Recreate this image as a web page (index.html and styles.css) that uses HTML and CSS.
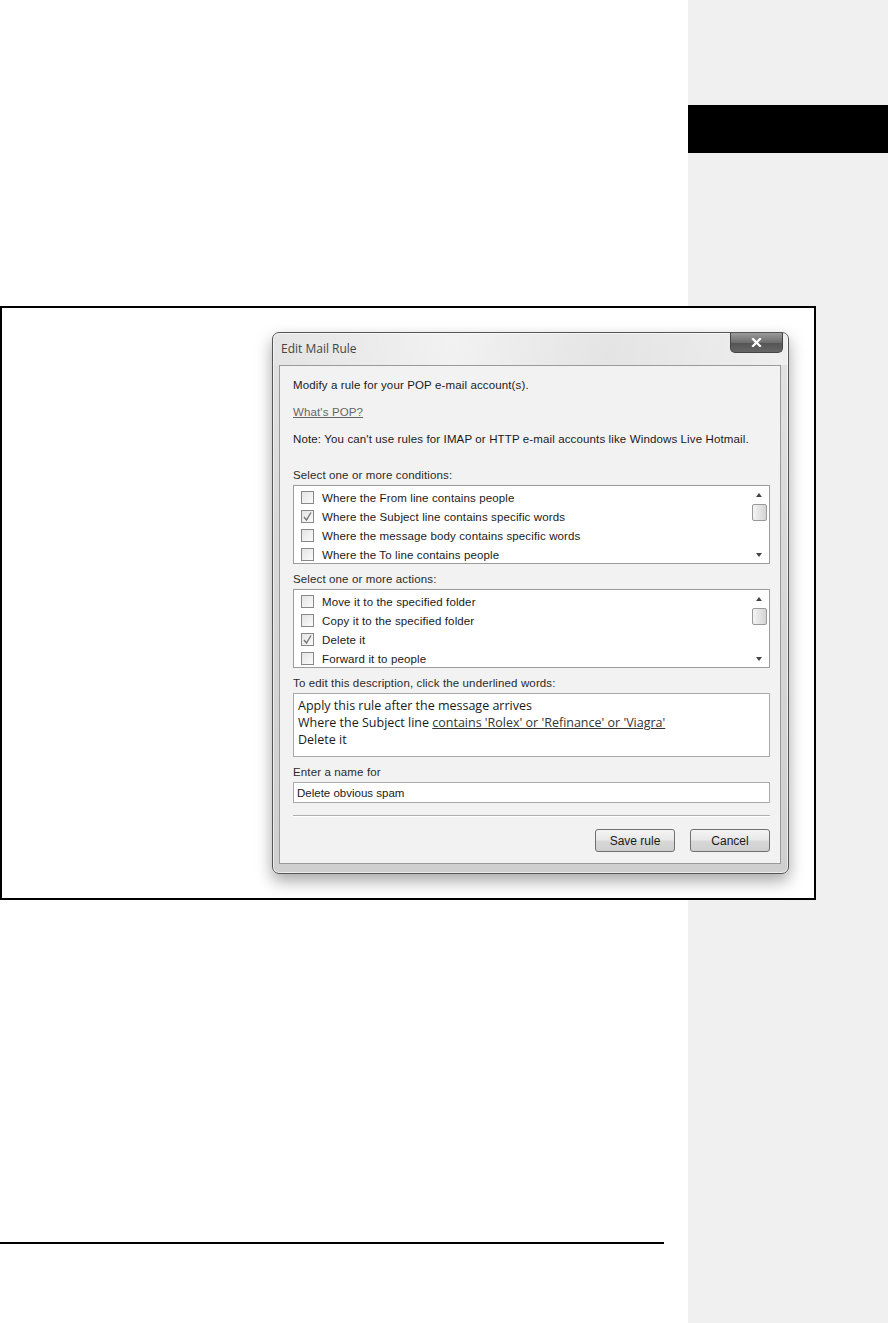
FILE: index.html
```html
<!DOCTYPE html>
<html lang="en">
<head>
    <meta charset="UTF-8">
    <title>Edit Mail Rule</title>
    <link rel="stylesheet" href="styles.css">
</head>
<body>
    <div class="page">
        <div class="tab"></div>

        <div class="figure">
            <div class="dialog">
                <div class="titlebar">
                    <span class="title">Edit Mail Rule</span>
                    <button class="close-btn" aria-label="Close">
                        <svg width="11" height="9" viewBox="0 0 11 9">
                            <path d="M2 1 L9 8 M9 1 L2 8" stroke="#fff" stroke-width="2.2" stroke-linecap="square"/>
                        </svg>
                    </button>
                </div>

                <div class="panel">
                    <p class="text first">Modify a rule for your POP e-mail account(s).</p>
                    <p class="text"><a href="#" class="link">What's POP?</a></p>
                    <p class="text">Note: You can't use rules for IMAP or HTTP e-mail accounts like Windows Live Hotmail.</p>

                    <p class="label label-first">Select one or more conditions:</p>
                    <div class="listbox">
                        <ul class="items">
                            <li><span class="check"></span>Where the From line contains people</li>
                            <li><span class="check on"><svg width="11" height="11" viewBox="0 0 11 11"><path d="M2 6 L4.5 9 L9 1.5" fill="none" stroke="#777" stroke-width="1.4"/></svg></span>Where the Subject line contains specific words</li>
                            <li><span class="check"></span>Where the message body contains specific words</li>
                            <li><span class="check"></span>Where the To line contains people</li>
                        </ul>
                        <div class="scrollbar">
                            <span class="arrow up"></span>
                            <span class="thumb"></span>
                            <span class="track"></span>
                            <span class="arrow down"></span>
                        </div>
                    </div>

                    <p class="label">Select one or more actions:</p>
                    <div class="listbox">
                        <ul class="items">
                            <li><span class="check"></span>Move it to the specified folder</li>
                            <li><span class="check"></span>Copy it to the specified folder</li>
                            <li><span class="check on"><svg width="11" height="11" viewBox="0 0 11 11"><path d="M2 6 L4.5 9 L9 1.5" fill="none" stroke="#777" stroke-width="1.4"/></svg></span>Delete it</li>
                            <li><span class="check"></span>Forward it to people</li>
                        </ul>
                        <div class="scrollbar">
                            <span class="arrow up"></span>
                            <span class="thumb"></span>
                            <span class="track"></span>
                            <span class="arrow down"></span>
                        </div>
                    </div>

                    <p class="label">To edit this description, click the underlined words:</p>
                    <div class="description">
                        <div>Apply this rule after the message arrives</div>
                        <div>Where the Subject line <a href="#" class="desc-link">contains 'Rolex' or 'Refinance' or 'Viagra'</a></div>
                        <div>Delete it</div>
                    </div>

                    <p class="label">Enter a name for</p>
                    <input class="name-input" type="text" value="Delete obvious spam">

                    <div class="separator"></div>

                    <div class="buttons">
                        <button class="btn">Save rule</button>
                        <button class="btn">Cancel</button>
                    </div>
                </div>
            </div>
        </div>

        <div class="rule-line"></div>
    </div>
</body>
</html>
```

FILE: styles.css
```css
body {
    margin: 0;
    padding: 0;
    font-family: "Liberation Sans", Arial, sans-serif;
    background: linear-gradient(to right, #ffffff 688px, #f0f0f0 688px);
}
.page {
    width: 888px;
    min-height: 1323px;
    padding-top: 105px;
    box-sizing: border-box;
}
.tab {
    margin-left: 688px;
    width: 200px;
    height: 48px;
    background-color: #000;
}
.figure {
    margin-top: 153px;
    width: 816px;
    height: 594px;
    box-sizing: border-box;
    border: 2px solid #000;
    background-color: #fff;
    padding: 24px 0 0 270px;
}
.dialog {
    width: 517px;
    box-sizing: border-box;
    border: 1px solid #555;
    border-radius: 7px;
    background: linear-gradient(to bottom, #e2e2e2 0%, #d8d8d8 40%, #cfcfcf 100%);
    box-shadow: 0 7px 16px rgba(0, 0, 0, 0.35), inset 0 0 0 1px rgba(255, 255, 255, 0.6);
}
.titlebar {
    height: 32px;
    display: flex;
    justify-content: space-between;
    align-items: flex-start;
    padding: 0 5px 0 8px;
    background: linear-gradient(to right, rgba(255,255,255,0.1), rgba(255,255,255,0.55) 35%, rgba(255,255,255,0.1) 65%, rgba(255,255,255,0.45));
    border-radius: 6px 6px 0 0;
}
.title {
    font-family: "Open Sans", "Liberation Sans", sans-serif;
    font-size: 12px;
    color: #444;
    line-height: 16px;
    margin-top: 8px;
}
.close-btn {
    width: 53px;
    height: 20px;
    margin: 0;
    padding: 0;
    border: 1px solid #444;
    border-top: none;
    border-radius: 0 0 5px 5px;
    background: linear-gradient(to bottom, #9a9a9a 0%, #6e6e6e 50%, #555 55%, #666 100%);
    display: flex;
    align-items: center;
    justify-content: center;
}
.panel {
    margin: 0 7px 9px 6px;
    border: 1px solid #9a9a9a;
    background-color: #f2f2f2;
    padding: 11px 10px 11px 13px;
}
.text, .label {
    margin: 0;
    font-size: 11.5px;
    line-height: 16px;
    letter-spacing: 0.13px;
    color: #1a1a1a;
}
.text {
    margin-top: 11px;
}
.text.first {
    margin-top: 0;
}
.link {
    color: #666;
    text-decoration: underline;
}
.label {
    margin-top: 7px;
    margin-bottom: 2px;
    color: #2a2a2a;
}
.label-first {
    margin-top: 20px;
}
.listbox {
    height: 79px;
    box-sizing: border-box;
    border: 1px solid #9c9c9c;
    background-color: #fff;
    display: flex;
}
.items {
    list-style: none;
    margin: 0;
    padding: 2px 0 0 7px;
    flex: 1;
}
.items li {
    height: 19px;
    display: flex;
    align-items: center;
    font-size: 11.5px;
    letter-spacing: 0.13px;
    color: #1a1a1a;
}
.check {
    width: 13px;
    height: 13px;
    box-sizing: border-box;
    border: 1px solid #888;
    background: linear-gradient(to bottom right, #e4e4e4, #fbfbfb);
    margin-right: 8px;
    display: flex;
    align-items: center;
    justify-content: center;
}
.scrollbar {
    width: 17px;
    margin-right: 1px;
    display: flex;
    flex-direction: column;
    align-items: center;
}
.arrow {
    height: 18px;
    width: 17px;
    position: relative;
}
.arrow::after {
    content: "";
    position: absolute;
    left: 5px;
    border-left: 3.5px solid transparent;
    border-right: 3.5px solid transparent;
}
.arrow.up::after {
    top: 7px;
    border-bottom: 4px solid #444;
}
.arrow.down::after {
    top: 8px;
    border-top: 4px solid #444;
}
.thumb {
    width: 15px;
    height: 17px;
    box-sizing: border-box;
    border: 1px solid #999;
    border-radius: 2px;
    background: linear-gradient(to right, #f4f4f4, #d4d4d4);
}
.track {
    flex: 1;
}
.description {
    height: 64px;
    box-sizing: border-box;
    border: 1px solid #a8a8a8;
    background-color: #fff;
    padding: 3px 4px;
    font-family: "Open Sans", "Liberation Sans", sans-serif;
    font-size: 12.5px;
    line-height: 17px;
    color: #1a1a1a;
}
.desc-link {
    color: #333;
    text-decoration: underline;
}
.name-input {
    display: block;
    width: 100%;
    height: 21px;
    box-sizing: border-box;
    margin: 0;
    border: 1px solid #a8a8a8;
    background-color: #fff;
    padding: 0 3px;
    font-family: "Liberation Sans", Arial, sans-serif;
    font-size: 11.5px;
    color: #1a1a1a;
}
.separator {
    margin-top: 12px;
    border-top: 1px solid #b0b0b0;
    border-bottom: 1px solid #fff;
}
.buttons {
    display: flex;
    justify-content: flex-end;
    gap: 15px;
    margin-top: 12px;
}
.btn {
    width: 80px;
    height: 23px;
    border: 1px solid #707070;
    border-radius: 3px;
    background: linear-gradient(to bottom, #f4f4f4 0%, #e8e8e8 48%, #d8d8d8 52%, #cfcfcf 100%);
    font-family: "Liberation Sans", Arial, sans-serif;
    font-size: 12px;
    color: #1a1a1a;
    padding: 0;
}
.rule-line {
    margin-top: 342px;
    width: 664px;
    border-top: 2px solid #000;
}
```
